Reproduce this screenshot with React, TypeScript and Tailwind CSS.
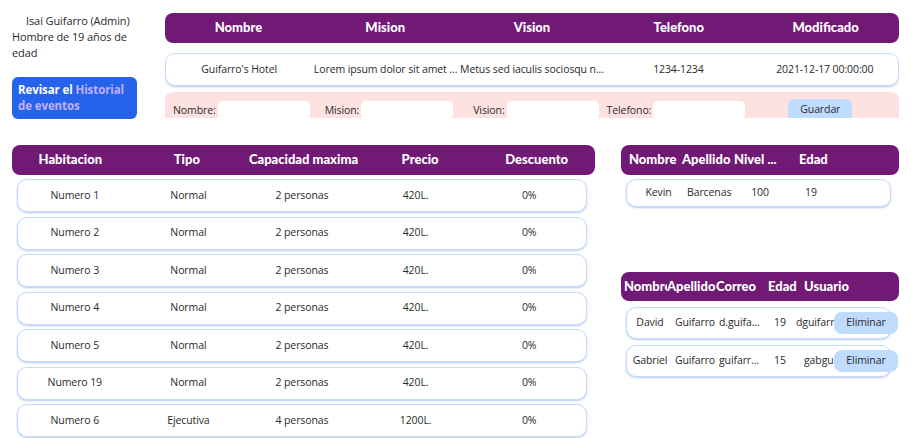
import React from 'react';

const hotelHeaders = ['Nombre', 'Mision', 'Vision', 'Telefono', 'Modificado'];
const hotelRow = ["Guifarro's Hotel", 'Lorem ipsum dolor sit amet ...', 'Metus sed iaculis sociosqu n...', '1234-1234', '2021-12-17 00:00:00'];

const roomHeaders = ['Habitacion', 'Tipo', 'Capacidad maxima', 'Precio', 'Descuento'];
const rooms = [
  ['Numero 1', 'Normal', '2 personas', '420L.', '0%'],
  ['Numero 2', 'Normal', '2 personas', '420L.', '0%'],
  ['Numero 3', 'Normal', '2 personas', '420L.', '0%'],
  ['Numero 4', 'Normal', '2 personas', '420L.', '0%'],
  ['Numero 5', 'Normal', '2 personas', '420L.', '0%'],
  ['Numero 19', 'Normal', '2 personas', '420L.', '0%'],
  ['Numero 6', 'Ejecutiva', '4 personas', '1200L.', '0%'],
];

const users = [
  { nombre: 'David', apellido: 'Guifarro', correo: 'd.guifa...', edad: '19', usuario: 'dguifarro', pad: 'pl-0' },
  { nombre: 'Gabriel', apellido: 'Guifarro', correo: 'guifarr...', edad: '15', usuario: 'gabguifarro', pad: 'pl-[8px]' },
];

const head = "font-['Lato',sans-serif] font-black text-[13px] tracking-normal text-white";
const card = 'rounded-[10px] border border-[#c7dcfb] bg-white shadow-[0_1px_2px_rgba(147,180,240,0.7)]';

export default function App() {
  return (
    <div className="min-h-screen bg-white text-[10.5px] tracking-[-0.1px] text-[#2a2a2a] font-['Open_Sans',sans-serif] px-3 pt-[13px]">
      <div className="flex h-[105px]">
        <div className="w-[153px] shrink-0">
          <p className="text-[11px] leading-4 pl-[14px]">Isaí Guifarro (Admin)</p>
          <p className="text-[11px] leading-4 whitespace-nowrap">
            Hombre de 19 años de
            <br />
            edad
          </p>
          <button className="mt-[16px] w-[125px] h-[42px] rounded-[6px] bg-[#2563eb] text-left px-[6px] text-[11.5px] leading-4 font-bold text-white">
            Revisar el <span className="text-[#c0b0ff]">Historial de eventos</span>
          </button>
        </div>

        <div className="flex-1 overflow-hidden">
          <div className={`grid grid-cols-5 h-[30px] items-center rounded-[8px] bg-[#701a75] text-center ${head}`}>
            {hotelHeaders.map((h) => (
              <span key={h}>{h}</span>
            ))}
          </div>
          <div className={`grid grid-cols-5 h-[33px] mt-[10px] items-center text-center ${card}`}>
            {hotelRow.map((c, i) => (
              <span key={i} className="whitespace-nowrap">{c}</span>
            ))}
          </div>
          <div className="mt-[6px] h-[40px] rounded-t-[8px] bg-[#fee2e2] flex items-start pt-[9px] pl-[8px]">
            <label className="flex items-center gap-[2px]">
              <span>Nombre:</span>
              <span className="block w-[92px] h-[19px] rounded-[5px] bg-white" />
            </label>
            <label className="flex items-center gap-[2px] ml-[15px]">
              <span>Mision:</span>
              <span className="block w-[92px] h-[19px] rounded-[5px] bg-white" />
            </label>
            <label className="flex items-center gap-[2px] ml-[20px]">
              <span>Vision:</span>
              <span className="block w-[92px] h-[19px] rounded-[5px] bg-white" />
            </label>
            <label className="flex items-center gap-[2px] ml-[8px]">
              <span>Telefono:</span>
              <span className="block w-[92px] h-[19px] rounded-[5px] bg-white" />
            </label>
            <button className="ml-[43px] -mt-[2px] w-[64px] h-[22px] rounded-[6px] bg-[#bfdbfe]">Guardar</button>
          </div>
        </div>
      </div>

      <div className="flex mt-[27px] gap-[26px]">
        <div className="w-[583px]">
          <div className={`grid grid-cols-5 h-[30px] items-center rounded-[8px] bg-[#701a75] text-center ${head}`}>
            {roomHeaders.map((h) => (
              <span key={h}>{h}</span>
            ))}
          </div>
          <div className="pl-[5px] pr-[8px] pt-[4px]">
            {rooms.map((r) => (
              <div key={r[0]} className={`grid grid-cols-5 h-[33px] mb-[4.5px] items-center text-center ${card}`}>
                {r.map((c, i) => (
                  <span key={i}>{c}</span>
                ))}
              </div>
            ))}
          </div>
        </div>

        <div className="w-[278px]">
          <div className={`grid grid-cols-[53px_52px_65px_1fr] h-[30px] pl-[8px] items-center rounded-[8px] bg-[#701a75] whitespace-nowrap ${head}`}>
            <span>Nombre</span>
            <span>Apellido</span>
            <span>Nivel ...</span>
            <span>Edad</span>
          </div>
          <div className={`ml-[5px] mr-[8px] mt-[4px] h-[28px] pl-[3px] grid grid-cols-[57px_44px_58px_44px] items-center text-center ${card}`}>
            <span>Kevin</span>
            <span>Barcenas</span>
            <span>100</span>
            <span>19</span>
          </div>

          <div className={`mt-[65px] grid grid-cols-[43px_49px_52px_36px_1fr] h-[29px] pl-[3px] items-center rounded-[8px] bg-[#701a75] whitespace-nowrap ${head}`}>
            <span className="overflow-hidden">Nombre</span>
            <span>Apellido</span>
            <span>Correo</span>
            <span>Edad</span>
            <span>Usuario</span>
          </div>
          <div className="ml-[5px] mr-[8px] pt-[6px]">
            {users.map((u) => (
              <div key={u.nombre} className={`h-[32px] mb-[6px] pl-[2px] grid grid-cols-[42px_48px_45px_32px_38px_64px] items-center whitespace-nowrap ${card}`}>
                <span className="text-center">{u.nombre}</span>
                <span className="text-center">{u.apellido}</span>
                <span className="overflow-hidden">{u.correo}</span>
                <span className="text-center">{u.edad}</span>
                <span className={`overflow-hidden ${u.pad}`}>{u.usuario}</span>
                <button className="h-[22px] rounded-[8px] bg-[#bfdbfe]">Eliminar</button>
              </div>
            ))}
          </div>
        </div>
      </div>
    </div>
  );
}
